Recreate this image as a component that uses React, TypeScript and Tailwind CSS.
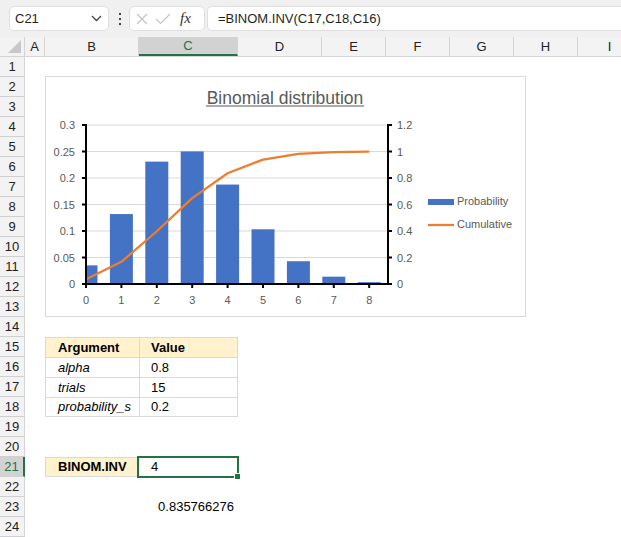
import React from 'react';

const cols = [
  { name: 'A', w: 'w-[20px]' },
  { name: 'B', w: 'w-[94px]' },
  { name: 'C', w: 'w-[99px]' },
  { name: 'D', w: 'w-[84px]' },
  { name: 'E', w: 'w-[64px]' },
  { name: 'F', w: 'w-[64px]' },
  { name: 'G', w: 'w-[64px]' },
  { name: 'H', w: 'w-[64px]' },
  { name: 'I', w: 'w-[64px]' },
];

const rows = Array.from({ length: 24 }, (_, i) => i + 1);

const args: Record<number, [string, string]> = {
  16: ['alpha', '0.8'],
  17: ['trials', '15'],
  18: ['probability_s', '0.2'],
};

const prob = [0.035184, 0.131941, 0.230897, 0.250139, 0.187604, 0.103182, 0.042993, 0.013819, 0.003455];
const cum = [0.035184, 0.167126, 0.398023, 0.648162, 0.835766, 0.938948, 0.981941, 0.99576, 0.999215];

const X0 = 86;
const STEP = 35.4;
const YB = 284;

function Chart() {
  const grid = [0, 1, 2, 3, 4, 5, 6].map((i) => YB - i * 26.5);
  const left = ['0', '0.05', '0.1', '0.15', '0.2', '0.25', '0.3'];
  const right = ['0', '0.2', '0.4', '0.6', '0.8', '1', '1.2'];
  const pts = cum.map((c, i) => `${X0 + i * STEP},${YB - c * 132.5}`).join(' ');
  return (
    <div className="absolute left-[45px] top-[76px] w-[481px] h-[241px] border border-[#d9d9d9] bg-white">
      <svg width="479" height="239" viewBox="46 77 479 239" className="block font-['Liberation_Sans',Arial,sans-serif]">
        <text x="285" y="104" textAnchor="middle" fontSize="17.5" fill="#595959">Binomial distribution</text>
        <line x1="206" y1="106" x2="364" y2="106" stroke="#595959" strokeWidth="1" />
        {grid.slice(1).map((y) => (
          <line key={y} x1={X0} y1={y} x2="388" y2={y} stroke="#d9d9d9" strokeWidth="1" />
        ))}
        {prob.map((p, i) => {
          const cx = X0 + i * STEP;
          const x = Math.max(X0, cx - 11.5);
          const w = cx + 11.5 - x;
          return <rect key={i} x={x} y={YB - p * 530} width={w} height={p * 530} fill="#4472c4" />;
        })}
        <polyline points={pts} fill="none" stroke="#ed7d31" strokeWidth="2.25" strokeLinejoin="round" />
        <line x1={X0} y1="124" x2={X0} y2={YB + 1} stroke="#000" strokeWidth="2" />
        <line x1="388" y1="124" x2="388" y2={YB + 1} stroke="#000" strokeWidth="2" />
        <line x1={X0 - 1} y1={YB} x2="389" y2={YB} stroke="#000" strokeWidth="2" />
        {grid.map((y) => (
          <g key={'t' + y}>
            <line x1={X0 - 4} y1={y} x2={X0} y2={y} stroke="#000" strokeWidth="2" />
            <line x1="388" y1={y} x2="392" y2={y} stroke="#000" strokeWidth="2" />
          </g>
        ))}
        {prob.map((_, i) => (
          <line key={'x' + i} x1={X0 + i * STEP} y1={YB} x2={X0 + i * STEP} y2={YB + 4} stroke="#000" strokeWidth="2" />
        ))}
        {left.map((l, i) => (
          <text key={l} x="75" y={grid[i] + 4} textAnchor="end" fontSize="11" fill="#595959">{l}</text>
        ))}
        {right.map((l, i) => (
          <text key={l} x="397" y={grid[i] + 4} fontSize="11" fill="#595959">{l}</text>
        ))}
        {prob.map((_, i) => (
          <text key={'l' + i} x={X0 + i * STEP} y="304" textAnchor="middle" fontSize="11" fill="#595959">{i}</text>
        ))}
        <rect x="428" y="199" width="26" height="6" fill="#4472c4" />
        <text x="457" y="205" fontSize="11" fill="#595959">Probability</text>
        <line x1="428" y1="225" x2="454" y2="225" stroke="#ed7d31" strokeWidth="2.25" />
        <text x="457" y="228" fontSize="11" fill="#595959">Cumulative</text>
      </svg>
    </div>
  );
}

function Cell({ row, col, w }: { row: number; col: string; w: string }) {
  let cls = `${w} h-[20px] shrink-0 flex items-center text-[13px] text-black`;
  let content: React.ReactNode = null;
  let extra: React.ReactNode = null;

  if (row === 15 && col === 'B') {
    cls += ' bg-[#fff2cc] font-bold border-l border-t border-[#d9d9d9] pl-[12px]';
    content = 'Argument';
  } else if (row === 15 && col === 'C') {
    cls += ' bg-[#fff2cc] font-bold border-l border-t border-r border-[#d9d9d9] pl-[11px]';
    content = 'Value';
  } else if (args[row] && col === 'B') {
    cls += ' italic border-l border-t border-[#d9d9d9] pl-[12px] whitespace-nowrap overflow-hidden';
    if (row === 18) cls += ' border-b';
    content = args[row][0];
  } else if (args[row] && col === 'C') {
    cls += ' border-l border-t border-r border-[#d9d9d9] pl-[11px]';
    if (row === 18) cls += ' border-b';
    content = args[row][1];
  } else if (row === 21 && col === 'B') {
    cls += ' bg-[#fff2cc] font-bold border border-[#d9d9d9] pl-[12px]';
    content = 'BINOM.INV';
  } else if (row === 21 && col === 'C') {
    cls += ' relative pl-[12px]';
    content = '4';
    extra = (
      <>
        <div className="absolute left-[-2px] top-[-1px] right-[-1px] bottom-[-1px] border-2 border-[#217346]" />
        <div className="absolute right-[-3px] bottom-[-3px] w-[5px] h-[5px] bg-[#217346] border border-white box-content" />
      </>
    );
  } else if (row === 23 && col === 'C') {
    cls += ' justify-end pr-[4px]';
    content = '0.835766276';
  }

  return (
    <div className={cls}>
      {content}
      {extra}
    </div>
  );
}

export default function App() {
  return (
    <div className="relative w-[621px] h-[537px] overflow-hidden bg-white font-['Liberation_Sans',Arial,sans-serif]">
      {/* formula bar */}
      <div className="h-[37px] bg-[#f0f0f0] flex items-center">
        <div className="ml-[9px] w-[100px] h-[25px] bg-white rounded-[5px] border border-[#e0e0e0] flex items-center justify-between pl-[5px] pr-[6px]">
          <span className="text-[13px] text-[#1f1f1f]">C21</span>
          <svg width="11" height="7" viewBox="0 0 11 7">
            <path d="M1 1l4.5 4.5L10 1" fill="none" stroke="#444" strokeWidth="1.3" />
          </svg>
        </div>
        <div className="ml-[9px] w-[4px] flex flex-col items-center gap-[3px]">
          <div className="w-[2px] h-[2px] bg-[#444]" />
          <div className="w-[2px] h-[2px] bg-[#444]" />
          <div className="w-[2px] h-[2px] bg-[#444]" />
        </div>
        <div className="ml-[7px] w-[76px] h-[25px] bg-white rounded-[5px] border border-[#e0e0e0] flex items-center pl-[5px]">
          <svg width="14" height="14" viewBox="0 0 14 14">
            <path d="M2 2l10 10M12 2L2 12" stroke="#c4c4c4" strokeWidth="1.2" />
          </svg>
          <svg width="16" height="14" viewBox="0 0 16 14" className="ml-[6px]">
            <path d="M1 7l4.5 4.5L15 2" fill="none" stroke="#c4c4c4" strokeWidth="1.2" />
          </svg>
          <span className="ml-[9px] text-[15px] italic font-['Liberation_Serif',serif] text-[#333]">fx</span>
        </div>
        <div className="ml-[2px] flex-1 h-[25px] bg-white rounded-l-[5px] border border-r-0 border-[#e0e0e0] flex items-center pl-[10px]">
          <span className="text-[13px] text-[#1f1f1f]">=BINOM.INV(C17,C18,C16)</span>
        </div>
      </div>

      {/* column headers */}
      <div className="flex h-[19px] bg-[#f3f3f3] border-b border-[#d4d4d4] box-content">
        <div className="w-[25px] h-[19px] shrink-0 relative border-r border-[#d4d4d4]">
          <div className="absolute right-[3px] bottom-[3px] w-0 h-0 border-l-[13px] border-l-transparent border-b-[13px] border-b-[#c8c8c8]" />
        </div>
        {cols.map((c) => (
          <div
            key={c.name}
            className={`${c.w} h-[19px] shrink-0 flex items-center justify-center text-[13px] border-r border-[#d4d4d4] ${
              c.name === 'C' ? 'bg-[#d2d2d2] text-[#217346] border-b-2 border-b-[#217346]' : 'text-[#222]'
            }`}
          >
            {c.name}
          </div>
        ))}
      </div>

      {/* rows */}
      {rows.map((r) => (
        <div key={r} className="flex h-[20px]">
          <div
            className={`w-[25px] h-[20px] shrink-0 flex items-center justify-center text-[13px] border-b border-[#d0d0d0] ${
              r === 21 ? 'bg-[#d2d2d2] text-[#217346] border-r-2 border-r-[#217346]' : 'bg-[#f3f3f3] text-[#222] border-r border-r-[#d4d4d4]'
            }`}
          >
            {r}
          </div>
          {cols.map((c) => (
            <Cell key={c.name} row={r} col={c.name} w={c.w} />
          ))}
        </div>
      ))}

      <Chart />
    </div>
  );
}
